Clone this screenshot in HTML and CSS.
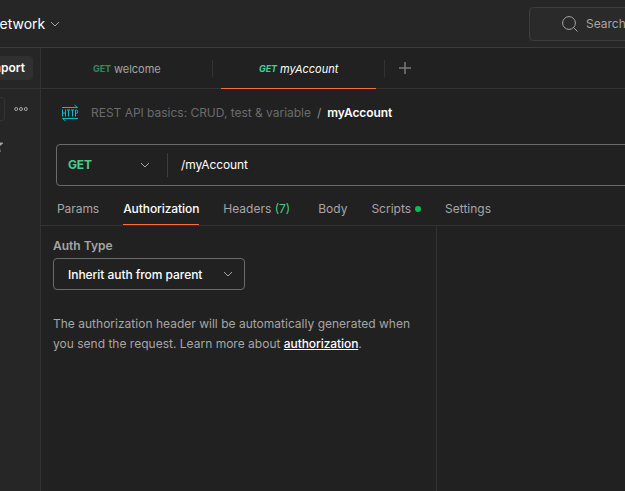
FILE: index.html
```html
<!DOCTYPE html>
<html lang="en">
<head>
<meta charset="utf-8">
<title>myAccount</title>
<link rel="stylesheet" href="styles.css">
</head>
<body>
<div class="app">
  <header class="topbar">
    <div class="nav-item"><span class="nav-label">Network</span>
      <svg class="chevron" width="10" height="6" viewBox="0 0 10 6"><path d="M1 1l4 4 4-4"/></svg>
    </div>
    <div class="search">
      <svg class="search-icon" width="16" height="16" viewBox="0 0 16 16"><circle cx="7" cy="7" r="6.4"/><path d="M11.5 11.5l4 4"/></svg>
      <span>Search</span>
    </div>
  </header>
  <div class="body">
    <aside class="sidebar">
      <div class="sidebar-head"><button class="import">Import</button></div>
      <div class="filter-row">
        <div class="filter"></div>
        <svg width="14" height="6" viewBox="0 0 14 6" class="dots"><circle cx="2.2" cy="3" r="1.5"/><circle cx="7" cy="3" r="1.5"/><circle cx="11.8" cy="3" r="1.5"/></svg>
      </div>
      <svg class="star" width="14" height="14" viewBox="0 0 14 14"><path d="M7 1l1.7 4.1 4.4.3-3.4 2.9 1.1 4.3L7 10.3l-3.8 2.3 1.1-4.3L.9 5.4l4.4-.3z"/></svg>
    </aside>
    <main class="main">
      <div class="tabs">
        <div class="tab"><span class="method">GET</span><span>welcome</span></div>
        <div class="tab tab-active"><span class="method">GET</span><span>myAccount</span></div>
        <div class="tab-add"><svg width="12" height="12" viewBox="0 0 12 12"><path d="M6 0v12M0 6h12"/></svg></div>
      </div>
      <div class="breadcrumb">
        <svg class="http" width="18" height="18" viewBox="0 0 18 18"><path d="M1 3.5h15.5M13.5 1l3 2.5M17 14.5H1.500M4.500 17l-3-2.5M1.500 5.500v7M4.500 5.500v7M1.500 9h3M6 6h3.200M7.500 6v6.500M10 6h3.200M11.500 6v6.500M14.500 12.500V6h1q1.300 0 1.300 1.700t-1.300 1.700h-1"/></svg>
        <span class="collection">REST API basics: CRUD, test &amp; variable</span>
        <span class="slash">/</span>
        <span class="request-name">myAccount</span>
      </div>
      <div class="urlbar">
        <div class="method-select"><span>GET</span><svg class="chevron" width="10" height="6" viewBox="0 0 10 6"><path d="M1 1l4 4 4-4"/></svg></div>
        <span class="url">/myAccount</span>
      </div>
      <nav class="subtabs">
        <span class="subtab params">Params</span>
        <span class="subtab auth">Authorization</span>
        <span class="subtab headers">Headers <span class="count">(7)</span></span>
        <span class="subtab body-tab">Body</span>
        <span class="subtab scripts">Scripts<i class="dot"></i></span>
        <span class="subtab">Settings</span>
      </nav>
      <div class="panes">
        <section class="auth-pane">
          <div class="label">Auth Type</div>
          <div class="select"><span>Inherit auth from parent</span><svg class="chevron" width="10" height="6" viewBox="0 0 10 6"><path d="M1 1l4 4 4-4"/></svg></div>
          <p class="help">The authorization header will be automatically generated when<br>you send the request. Learn more about <a>authorization</a>.</p>
        </section>
      </div>
    </main>
  </div>
</div>
</body>
</html>
```
FILE: styles.css
```css
* { box-sizing: border-box; }
body {
  margin: 0;
  overflow: hidden;
  background: #212121;
  color: #a6a6a6;
  font: 12px/20px Inter, "Liberation Sans", sans-serif;
  white-space: nowrap;
}
svg { display: block; flex: none; fill: none; stroke: #a6a6a6; }
.app { width: 625px; height: 491px; display: flex; flex-direction: column; overflow: hidden; }
.topbar {
  height: 48px;
  flex: none;
  display: flex;
  justify-content: space-between;
  align-items: center;
  background: #262626;
  border-bottom: 1px solid #3b3b3b;
}
.nav-item { display: flex; align-items: center; gap: 5px; margin-left: -11px; color: #fff; font-size: 14px; }
.search {
  width: 110px;
  height: 34px;
  margin-right: -14px;
  flex: none;
  display: flex;
  align-items: center;
  gap: 8px;
  padding-left: 32px;
  border: 1px solid #3d3d3d;
  border-radius: 4px;
  background: #2a2a2a;
}
.body { flex: 1; display: flex; }
.sidebar { width: 41px; flex: none; background: #262626; border-right: 1px solid #333; overflow: hidden; }
.sidebar-head { height: 41px; padding: 8px 7px 0 0; display: flex; justify-content: flex-end; border-bottom: 1px solid #333; }
.import {
  flex: none;
  height: 24px;
  padding: 0 8px;
  border: 0;
  border-radius: 4px;
  background: #303030;
  color: #fff;
  font: 600 12px/24px Inter, sans-serif;
}
.filter-row { display: flex; align-items: center; margin-top: 8px; }
.filter { width: 5px; height: 24px; margin-right: 9px; border: 1px solid #333; border-left: 0; border-radius: 0 4px 4px 0; }
.star { margin: 17px 0 0 -11px; stroke-width: 1.3; }
.main { flex: 1; min-width: 0; display: flex; flex-direction: column; }
.tabs { height: 41px; flex: none; display: flex; border-bottom: 1px solid #333; font-size: 11px; }
.tab {
  position: relative;
  width: 172px;
  height: 41px;
  padding-left: 52px;
  display: flex;
  align-items: center;
  gap: 3px;
}
.tab::after { content: ""; width: 1px; height: 17px; background: #333; position: absolute; right: 0; top: 12px; }
.method { font-size: 9px; font-weight: 700; letter-spacing: -0.1px; color: #3f8460; }
.tab-active { padding-left: 46px; color: #fff; font-style: italic; }
.tab-active::before { content: ""; position: absolute; left: 8px; right: 9px; bottom: 0; height: 1px; background: #ff6c37; }
.tab-active .method { color: #49cc8b; }
.tab-add { padding: 14px 0 0 14px; }
.tab-add svg { stroke: #7a7a7a; stroke-width: 1.5; }
.breadcrumb { height: 48px; flex: none; display: flex; align-items: center; padding-left: 20px; color: #6b6b6b; }
.http { stroke: #12b8c5; }
.collection { margin-left: 12px; letter-spacing: -0.02px; }
.slash { margin: 0 6px; color: #8a8a8a; }
.request-name { color: #fff; font-weight: 600; letter-spacing: -0.08px; }
.urlbar {
  height: 42px;
  flex: none;
  margin: 7px -10px 0 15px;
  display: flex;
  align-items: center;
  border: 1px solid #6b6b6b;
  border-radius: 4px;
}
.method-select {
  width: 111px;
  height: 24px;
  padding: 0 17px 0 11px;
  display: flex;
  align-items: center;
  justify-content: space-between;
  border-right: 1px solid #3d3d3d;
  color: #49cc8b;
  font-weight: 700;
  letter-spacing: -0.2px;
}
.url { margin-left: 13px; color: #fff; letter-spacing: -0.1px; }
.subtabs {
  height: 40px;
  flex: none;
  display: flex;
  padding: 13px 0 0 16px;
  gap: 24px;
  border-bottom: 1px solid #333;
}
.subtab { height: 26px; }
.params { letter-spacing: -0.06px; }
.auth { color: #fff; font-weight: 500; letter-spacing: -0.08px; border-bottom: 1px solid #ff6c37; }
.count { color: #49cc8b; }
.body-tab { margin-left: 4px; }
.scripts { display: flex; }
.dot { width: 6px; height: 6px; margin: 7px 0 0 4px; border-radius: 50%; background: #0cbb52; }
.panes { flex: 1; display: flex; }
.auth-pane { width: 396px; padding: 10px 12px; border-right: 1px solid #333; }
.label { font-weight: 600; }
.select {
  width: 192px;
  height: 32px;
  margin-top: 2px;
  padding: 1px 11px 0 14px;
  display: flex;
  align-items: center;
  justify-content: space-between;
  border: 1px solid #6b6b6b;
  border-radius: 4px;
  color: #fff;
  font-weight: 500;
  letter-spacing: -0.05px;
}
.select .chevron { margin-top: -1px; }
.help { margin: 24px 0 0; letter-spacing: 0.01px; }
.help a { color: #fff; font-weight: 500; letter-spacing: -0.08px; text-decoration: underline; }
```
